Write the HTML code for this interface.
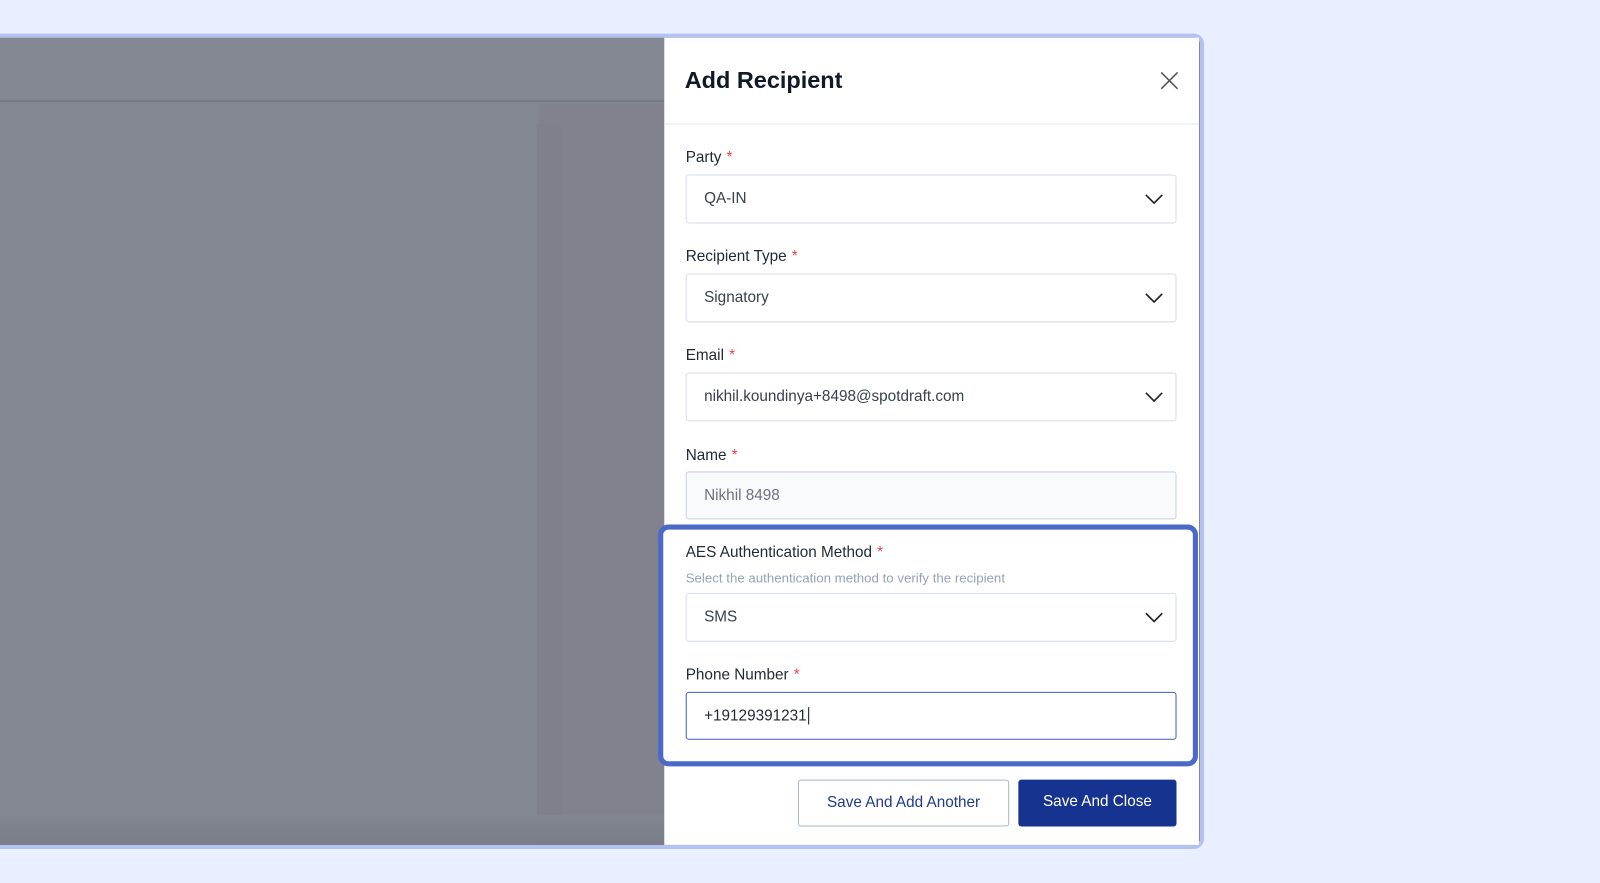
<!DOCTYPE html>
<html><head><style>
*{box-sizing:border-box;margin:0;padding:0}
body{width:1600px;height:883px;background:#e9effe;position:relative;overflow:hidden;font-family:"Liberation Sans",sans-serif}
#w{position:absolute;left:0;top:0;width:1568px;height:865px;transform:scale(1.0204);transform-origin:0 0}
.frame{position:absolute;left:-6px;top:33px;width:1186px;height:799px;border:4px solid #b3c2f0;border-radius:0 10px 10px 0;overflow:hidden;background:#838791}
.hdr{position:absolute;left:0;top:0;width:660px;height:63px;border-bottom:2px solid #767a85;background:#838791}
.right{position:absolute;left:530px;top:65px;width:130px;height:730px;background:#81828d}
.stripe{position:absolute;left:528px;top:85px;width:24px;height:680px;background:#7e818b}
.bot{position:absolute;left:0;top:762px;width:660px;height:33px;background:linear-gradient(#828690,#787c87)}
.panel{position:absolute;left:651px;top:37px;width:524px;height:791px;background:#fff}
.title{position:absolute;left:671px;top:65px;font-size:23px;font-weight:bold;color:#111827}
.hline{position:absolute;left:651px;top:121px;width:524px;height:1px;background:#e2e8f0}
.lbl{position:absolute;left:672px;font-size:15px;color:#1f2937}
.lbl b{color:#ef4444;font-weight:normal;margin-left:5px}
.fld{position:absolute;left:672px;width:481px;height:48px;border:1px solid #d6dde8;border-radius:3px;font-size:15px;color:#374151;padding-left:17px;line-height:46px;background:#fff}
.fld svg{position:absolute;right:12px;top:18px}
.hl{position:absolute;left:645px;top:514px;width:529px;height:237px;border:5px solid #4b69c8;border-radius:10px;background:#fff}
.btn{position:absolute;top:764px;height:46px;font-size:15px;line-height:44px;text-align:center;border-radius:3px}
</style></head><body><div id="w">
<div class="frame"><div class="hdr"></div><div class="right"></div><div class="stripe"></div><div class="bot"></div></div>
<div class="panel"></div>
<div class="title">Add Recipient</div>
<svg style="position:absolute;left:1137px;top:70px" width="18" height="18" viewBox="0 0 18 18"><path d="M1 1L17 17M17 1L1 17" stroke="#555" stroke-width="1.5"/></svg>
<div class="hline"></div>
<div class="lbl" style="top:146px">Party<b>*</b></div>
<div class="fld" style="top:171px">QA-IN<svg width="18" height="10" viewBox="0 0 18 10"><path d="M1 1L9 9L17 1" fill="none" stroke="#222" stroke-width="1.6"/></svg></div>
<div class="lbl" style="top:243px">Recipient Type<b>*</b></div>
<div class="fld" style="top:268px">Signatory<svg width="18" height="10" viewBox="0 0 18 10"><path d="M1 1L9 9L17 1" fill="none" stroke="#222" stroke-width="1.6"/></svg></div>
<div class="lbl" style="top:340px">Email<b>*</b></div>
<div class="fld" style="top:365px">nikhil.koundinya+8498@spotdraft.com<svg width="18" height="10" viewBox="0 0 18 10"><path d="M1 1L9 9L17 1" fill="none" stroke="#222" stroke-width="1.6"/></svg></div>
<div class="lbl" style="top:438px">Name<b>*</b></div>
<div class="fld" style="top:462px;height:47px;background:#f8fafc;border-color:#c9d2de;color:#6b7280">Nikhil 8498</div>
<div class="hl"></div>
<div class="lbl" style="top:533px">AES Authentication Method<b>*</b></div>
<div style="position:absolute;left:672px;top:559px;font-size:13px;color:#94a3b8">Select the authentication method to verify the recipient</div>
<div class="fld" style="top:581px">SMS<svg width="18" height="10" viewBox="0 0 18 10"><path d="M1 1L9 9L17 1" fill="none" stroke="#222" stroke-width="1.6"/></svg></div>
<div class="lbl" style="top:653px">Phone Number<b>*</b></div>
<div class="fld" style="top:678px;height:47px;border-color:#3f5fbf;color:#1f2937">+19129391231<span style="border-left:1px solid #111;margin-left:1px"></span></div>
<div class="btn" style="left:782px;width:207px;border:1px solid #a8b4c8;color:#1e3a8a;background:#fff">Save And Add Another</div>
<div class="btn" style="left:998px;width:155px;background:#16348f;color:#fff">Save And Close</div>
</div></body></html>
